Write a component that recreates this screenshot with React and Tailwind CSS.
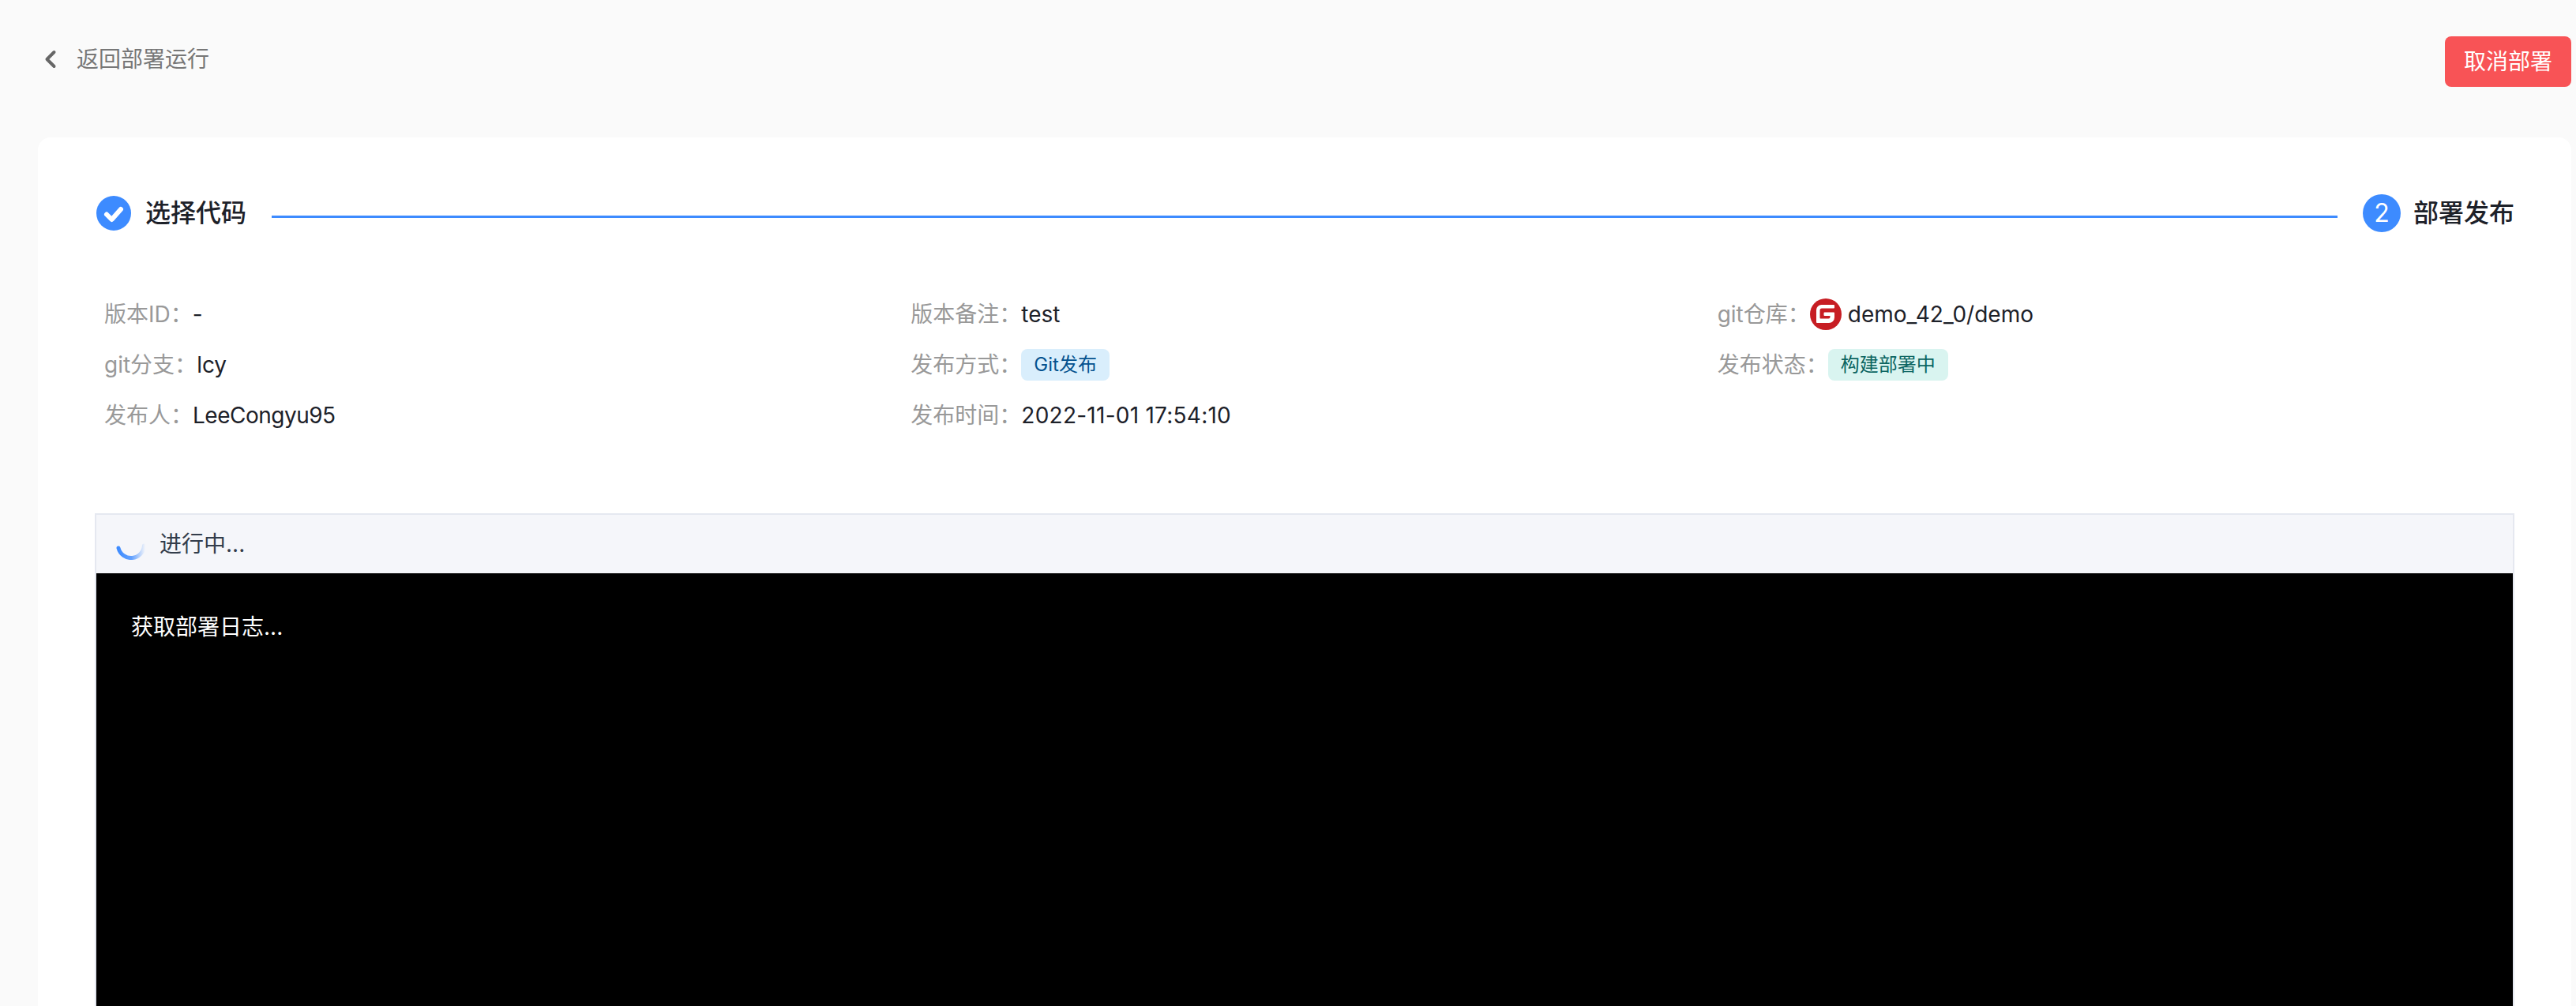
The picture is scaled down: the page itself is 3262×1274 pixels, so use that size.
const font = { fontFamily: 'Inter, "Noto Sans CJK SC", sans-serif' }

const Label = ({ children }) => <span className="text-[#999999]">{children}</span>

function GiteeIcon() {
  return (
    <svg width="40" height="40" viewBox="0 0 40 40" className="shrink-0 mr-2">
      <circle cx="20" cy="20" r="20" fill="#c71d23" />
      <path
        d="M30 17.500H18.500a1 1 0 0 0-1 1v2.500a1 1 0 0 0 1 1h7v1.500a2 2 0 0 1-2 2h-10a1 1 0 0 1-1-1V15a2.500 2.500 0 0 1 2.500-2.500H30a1 1 0 0 0 1-1V9a1 1 0 0 0-1-1H14.500a6.500 6.500 0 0 0-6.500 6.500V30a1 1 0 0 0 1 1h15a7 7 0 0 0 7-7V18.500a1 1 0 0 0-1-1z"
        fill="#fff"
      />
    </svg>
  )
}

function Spinner() {
  return (
    <svg width="40" height="40" viewBox="0 0 40 40" className="shrink-0">
      <defs>
        <linearGradient id="spin" gradientUnits="userSpaceOnUse" x1="3" y1="0" x2="38" y2="0">
          <stop offset="0" stopColor="#3d8bff" />
          <stop offset="0.5" stopColor="#3d8bff" stopOpacity="0.8" />
          <stop offset="1" stopColor="#3d8bff" stopOpacity="0" />
        </linearGradient>
      </defs>
      <path d="M4 25A16.500 16.500 0 0 0 36.500 22" fill="none" stroke="url(#spin)" strokeWidth="5" strokeLinecap="round" />
    </svg>
  )
}

export default function App() {
  return (
    <div style={font} className="h-[1274px] overflow-hidden bg-[#fafafa] text-[28px] leading-[40px] text-[#1d2129]">
      <div className="flex items-start justify-between pt-[46px] pr-[6px] pl-[56px]">
        <a className="mt-[9px] flex items-center text-[#777777]">
          <svg width="16" height="24" viewBox="0 0 16 24" className="mr-[25px]">
            <path d="M12.500 3 3.500 12l9 9" fill="none" stroke="#666666" strokeWidth="4" strokeLinecap="round" strokeLinejoin="round" />
          </svg>
          返回部署运行
        </a>
        <button className="h-16 w-40 rounded-lg bg-[#f85356] text-white">取消部署</button>
      </div>

      <div className="mt-16 mr-[6px] ml-12 h-[1100px] rounded-t-2xl bg-white px-[72px] pt-[72px]">
        <div className="flex items-center">
          <svg width="44" height="44" viewBox="0 0 44 44" className="ml-[2px] shrink-0">
            <circle cx="22" cy="22" r="22" fill="#3d8bff" />
            <path d="M13 23.500 19.500 30 31 17" fill="none" stroke="#fff" strokeWidth="6" strokeLinecap="round" strokeLinejoin="round" />
          </svg>
          <span className="ml-[18px] text-[32px] font-medium leading-[48px]">选择代码</span>
          <div className="mx-8 mt-[8px] h-[3px] flex-1 bg-[#3d8bff]" />
          <div className="flex h-12 w-12 shrink-0 items-center justify-center rounded-full bg-[#3d8bff] text-[32px] text-white">2</div>
          <span className="ml-4 text-[32px] font-medium leading-[48px]">部署发布</span>
        </div>

        <div className="mt-[84px] grid grid-cols-3 gap-y-6">
          <div className="pl-3"><Label>版本ID：</Label>-</div>
          <div className="pl-3"><Label>版本备注：</Label>test</div>
          <div className="flex items-center pl-3"><Label>git仓库：</Label><GiteeIcon />demo_42_0/demo</div>
          <div className="pl-3"><Label>git分支：</Label>lcy</div>
          <div className="flex items-center pl-3">
            <Label>发布方式：</Label>
            <span className="rounded-lg bg-[#d9eefc] px-4 text-2xl leading-[40px] text-[#04528f]">Git发布</span>
          </div>
          <div className="flex items-center pl-3">
            <Label>发布状态：</Label>
            <span className="rounded-lg bg-[#d9f4f0] px-4 text-2xl leading-[40px] text-[#0b6460]">构建部署中</span>
          </div>
          <div className="pl-3"><Label>发布人：</Label><span className="tracking-[-0.5px]">LeeCongyu95</span></div>
          <div className="pl-3"><Label>发布时间：</Label><span className="tracking-[0.25px]">2022-11-01 17:54:10</span></div>
        </div>

        <div className="mt-[104px] border-2 border-[#e5e8f0] bg-black">
          <div className="flex h-[74px] items-center gap-4 bg-[#f5f6fa] pl-6 text-[#333d4b]">
            <Spinner />
            进行中...
          </div>
          <div className="h-[700px] px-11 pt-12 text-white">获取部署日志...</div>
        </div>
      </div>
    </div>
  )
}
